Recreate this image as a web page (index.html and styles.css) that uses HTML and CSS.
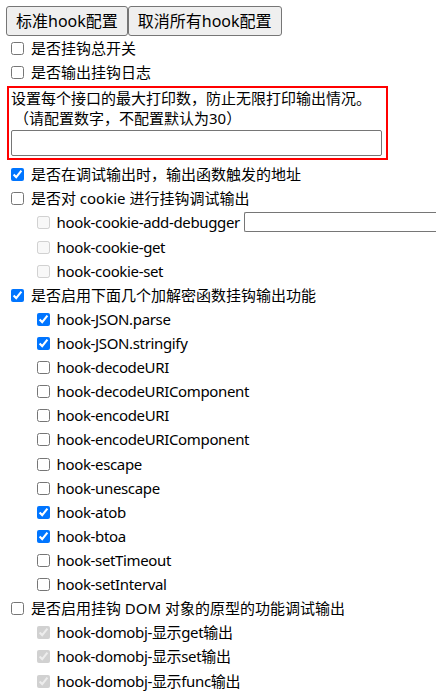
FILE: index.html
```html
<!DOCTYPE html>
<html lang="zh-CN">
<head>
<meta charset="utf-8">
<link rel="stylesheet" href="styles.css">
</head>
<body>
<div class="btns"><button class="btn">标准hook配置</button><button class="btn">取消所有hook配置</button></div>
<div class="row"><label><input type="checkbox"> 是否挂钩总开关</label></div>
<div class="row"><label><input type="checkbox"> 是否输出挂钩日志</label></div>
<div class="box">
  <div class="line">设置每个接口的最大打印数，防止无限打印输出情况。</div>
  <div class="line second">（请配置数字，不配置默认为30）</div>
  <input class="num" type="text">
</div>
<div class="row"><label><input type="checkbox" checked> 是否在调试输出时，输出函数触发的地址</label></div>
<div class="row"><label><input type="checkbox"> 是否对 cookie 进行挂钩调试输出</label></div>
<div class="row sub"><label><input type="checkbox" disabled> hook-cookie-add-debugger</label> <input class="dbg" type="text"></div>
<div class="row sub"><label><input type="checkbox" disabled> hook-cookie-get</label></div>
<div class="row sub"><label><input type="checkbox" disabled> hook-cookie-set</label></div>
<div class="row"><label><input type="checkbox" checked> 是否启用下面几个加解密函数挂钩输出功能</label></div>
<div class="row sub"><label><input type="checkbox" checked> hook-JSON.parse</label></div>
<div class="row sub"><label><input type="checkbox" checked> hook-JSON.stringify</label></div>
<div class="row sub"><label><input type="checkbox"> hook-decodeURI</label></div>
<div class="row sub"><label><input type="checkbox"> hook-decodeURIComponent</label></div>
<div class="row sub"><label><input type="checkbox"> hook-encodeURI</label></div>
<div class="row sub"><label><input type="checkbox"> hook-encodeURIComponent</label></div>
<div class="row sub"><label><input type="checkbox"> hook-escape</label></div>
<div class="row sub"><label><input type="checkbox"> hook-unescape</label></div>
<div class="row sub"><label><input type="checkbox" checked> hook-atob</label></div>
<div class="row sub"><label><input type="checkbox" checked> hook-btoa</label></div>
<div class="row sub"><label><input type="checkbox"> hook-setTimeout</label></div>
<div class="row sub"><label><input type="checkbox"> hook-setInterval</label></div>
<div class="row"><label><input type="checkbox"> 是否启用挂钩 DOM 对象的原型的功能调试输出</label></div>
<div class="row sub"><label><input type="checkbox" checked disabled> hook-domobj-显示get输出</label></div>
<div class="row sub"><label><input type="checkbox" checked disabled> hook-domobj-显示set输出</label></div>
<div class="row sub"><label><input type="checkbox" checked disabled> hook-domobj-显示func输出</label></div>
</body>
</html>
```

FILE: styles.css
```css
html, body {
  margin: 0;
  padding: 0;
  background: #fff;
}
body {
  padding: 6px 0 0 7px;
  font-family: "Noto Sans", "Noto Sans CJK SC", sans-serif;
  font-size: 15px;
  color: #000;
  white-space: nowrap;
  overflow: hidden;
}
.btns {
  display: flex;
  margin-left: -1px;
}
.btn {
  font-family: "Noto Sans", "Noto Sans CJK SC", sans-serif;
  font-size: 16px;
  height: 30px;
  padding: 0 9px;
  margin: 0;
  background: #efefef;
  border: 1px solid #767676;
  border-radius: 3px;
  color: #000;
  line-height: 28px;
}
.row {
  height: 24.12px;
  line-height: 24px;
  display: flex;
  align-items: center;
}
.row input[type=checkbox] {
  width: 13px;
  height: 13px;
  margin: 0 3px 0 4px;
  vertical-align: middle;
  position: relative;
  top: -1.5px;
}
.sub {
  padding-left: 26px;
}
.sub label {
  letter-spacing: -0.35px;
}
.box {
  margin: 2px 0 2px 0;
  width: 375px;
  border: 2px solid #f00;
  padding: 0 0 2px 2px;
}
.line {
  line-height: 20px;
  height: 20px;
}
.second {
  padding-left: 3px;
}
.num {
  display: block;
  margin-top: 2px;
  width: 371px;
  height: 26px;
  box-sizing: border-box;
  border: 1px solid #767676;
  border-radius: 2px;
  padding: 0 2px;
}
.dbg {
  flex: 1 1 auto;
  min-width: 0;
  width: auto;
  height: 20px;
  box-sizing: border-box;
  border: 1px solid #767676;
  border-right: none;
  border-radius: 2px 0 0 2px;
  margin: 0 0 0 4px;
  padding: 0 2px;
}
```
